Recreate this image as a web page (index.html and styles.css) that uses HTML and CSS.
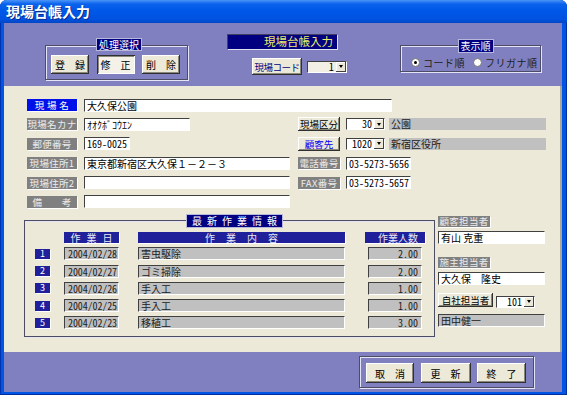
FILE: index.html
```html
<!DOCTYPE html>
<html lang="ja">
<head>
    <meta charset="UTF-8">
    <meta name="viewport" content="width=device-width, initial-scale=1.0">
    <title>現場台帳入力</title>
    <link rel="stylesheet" href="styles.css">
</head>
<body>

<div class="window">
    <div class="titlebar">現場台帳入力</div>
    <div class="client">

        <div class="head">
            <div class="group mode">
                <div class="legend">処理選択</div>
                <div class="btnrow">
                    <button class="btn mode-btn">登　録</button>
                    <button class="btn mode-btn pressed">修　正</button>
                    <button class="btn mode-btn">削　除</button>
                </div>
            </div>
            <div class="center">
                <div class="title-box">現場台帳入力</div>
                <div class="coderow">
                    <button class="btn code-btn">現場コード</button>
                    <div class="combo beige code-combo"><span class="val">1</span><span class="arrow"></span></div>
                </div>
            </div>
            <div class="group order">
                <div class="legend">表示順</div>
                <div class="radios">
                    <span class="radio checked"><span class="dot"></span>コード順</span>
                    <span class="radio"><span class="dot"></span>フリガナ順</span>
                </div>
            </div>
        </div>

        <div class="panel">
            <div class="form">
                <div class="row">
                    <span class="lbl blue">現 場 名</span>
                    <span class="field w-name">大久保公園</span>
                </div>
                <div class="row">
                    <div class="left">
                        <span class="lbl">現場名カナ</span>
                        <span class="field w-kana">ｵｵｸﾎﾞｺｳｴﾝ</span>
                    </div>
                    <div class="right">
                        <button class="btn side-btn">現場区分</button>
                        <div class="combo side-combo"><span class="val num">30</span><span class="arrow"></span></div>
                        <span class="grey w-grey">公園</span>
                    </div>
                </div>
                <div class="row">
                    <div class="left">
                        <span class="lbl">郵便番号</span>
                        <span class="field w-zip num">169-0025</span>
                    </div>
                    <div class="right">
                        <button class="btn side-btn blue-text">顧客先</button>
                        <div class="combo side-combo"><span class="val num">1020</span><span class="arrow"></span></div>
                        <span class="grey w-grey">新宿区役所</span>
                    </div>
                </div>
                <div class="row">
                    <div class="left">
                        <span class="lbl">現場住所1</span>
                        <span class="field w-addr">東京都新宿区大久保１－２－３</span>
                    </div>
                    <div class="right">
                        <span class="lbl short">電話番号</span>
                        <span class="field w-tel num">03-5273-5656</span>
                    </div>
                </div>
                <div class="row">
                    <div class="left">
                        <span class="lbl">現場住所2</span>
                        <span class="field w-addr"></span>
                    </div>
                    <div class="right">
                        <span class="lbl short">FAX番号</span>
                        <span class="field w-tel num">03-5273-5657</span>
                    </div>
                </div>
                <div class="row">
                    <div class="left">
                        <span class="lbl">備　　考</span>
                        <span class="field w-addr"></span>
                    </div>
                </div>
            </div>

            <div class="bottom">
                <div class="group works">
                    <div class="legend wide">最新作業情報</div>
                    <div class="work-grid">
                        <span></span>
                        <span class="th th-date">作業日</span>
                        <span class="th th-work">作業内容</span>
                        <span class="th th-count">作業人数</span>

                        <span class="badge">1</span>
                        <span class="cell date num">2004/02/28</span>
                        <span class="cell work">害虫駆除</span>
                        <span class="cell count num">2.00</span>

                        <span class="badge">2</span>
                        <span class="cell date num">2004/02/27</span>
                        <span class="cell work">ゴミ掃除</span>
                        <span class="cell count num">2.00</span>

                        <span class="badge">3</span>
                        <span class="cell date num">2004/02/26</span>
                        <span class="cell work">手入工</span>
                        <span class="cell count num">1.00</span>

                        <span class="badge">4</span>
                        <span class="cell date num">2004/02/25</span>
                        <span class="cell work">手入工</span>
                        <span class="cell count num">1.00</span>

                        <span class="badge">5</span>
                        <span class="cell date num">2004/02/23</span>
                        <span class="cell work">移植工</span>
                        <span class="cell count num">3.00</span>
                    </div>
                </div>

                <div class="staff">
                    <span class="lbl staff-lbl">顧客担当者</span>
                    <span class="field staff-field">有山 克重</span>
                    <span class="lbl staff-lbl second">施主担当者</span>
                    <span class="field staff-field">大久保　隆史</span>
                    <div class="staff-row">
                        <button class="btn staff-btn">自社担当者</button>
                        <div class="combo staff-combo"><span class="val num">101</span><span class="arrow"></span></div>
                    </div>
                    <span class="cell staff-grey">田中健一</span>
                </div>
            </div>
        </div>

        <div class="foot">
            <div class="group actions">
                <button class="btn act w48">取　消</button>
                <button class="btn act w50">更　新</button>
                <button class="btn act w49">終　了</button>
            </div>
        </div>

    </div>
</div>

</body>
</html>
```

FILE: styles.css
```css
* {box-sizing: border-box; margin: 0; padding: 0;}
body {background: #fff; font-family: "Noto Sans CJK JP", sans-serif; font-size: 10px; color: #000;}

/* window frame */
.window {width: 567px; height: 395px; display: flex; flex-direction: column; background: #0055e5; border-radius: 7px 7px 0 0; box-shadow: inset 1px 0 #0033b0, inset -1px 0 #002f9c, inset 0 -1px #002f9c;}
.titlebar {height: 23px; flex: none; padding: 2px 0 0 6px; color: #fff; font-size: 14px; font-weight: bold; line-height: 19px; text-shadow: 1px 1px #0b2a8c; border-radius: 7px 7px 0 0; background: linear-gradient(#4a95f8, #0a62ec 4px, #0058e8 45%, #0052e0 85%, #0046c4);}
.client {flex: 1; display: flex; flex-direction: column; margin: 0 5px 3px 4px; background: #8080c0;}

/* shared widgets */
.btn {display: flex; align-items: center; justify-content: center; border: none; background: #ece9d8; font-family: inherit; font-size: 10px; color: #000; box-shadow: inset -1px -1px #303030, inset 1px 1px #fff, inset -2px -2px #8a8878;}
.btn.pressed {background: #f3f1e8; box-shadow: inset 1px 1px #303030, inset -1px -1px #fff, inset 2px 2px #8a8878;}
.group {border: 1px solid #4c4c64; box-shadow: inset 1px 1px #e4e4f4, 1px 1px #e4e4f4;}
.legend {display: table; margin: -7px auto 0; height: 11px; line-height: 11px; padding: 0 2px; background: #000080; color: #fff; font-size: 10px; box-shadow: 0 0 0 1px #b8b8dc;}
.num {font-feature-settings: "hwid";}
.field {display: block; height: 13px; line-height: 11px; padding-left: 2px; background: #fff; border: 1px solid; border-color: #404040 #fff #fff #404040; white-space: nowrap; overflow: hidden;}
.grey {display: block; height: 12px; line-height: 12px; padding-left: 2px; background: #c0c0c0; color: #202020;}
.lbl {display: block; flex: none; width: 50px; height: 12px; line-height: 12px; text-align: center; background: #808080; color: #ececec; font-size: 9.5px; letter-spacing: 0.3px; box-shadow: 1px 1px #fff;}
.lbl.blue {background: #0010e8; color: #fff;}
.combo {display: flex; flex: none; height: 12px; background: #fff; border: 1px solid; border-color: #404040 #fff #fff #404040;}
.combo.beige {background: #f2f0e4;}
.combo .val {flex: 1; text-align: right; padding-right: 2px; line-height: 10px;}
.combo .arrow {display: flex; align-items: center; justify-content: center; width: 10px; background: #ece9d8; box-shadow: inset -1px -1px #404040, inset 1px 1px #fff;}
.combo .arrow::after {content: ""; border-left: 2.5px solid transparent; border-right: 2.5px solid transparent; border-top: 3px solid #000;}

/* header strip */
.head {height: 63px; flex: none; display: flex; align-items: flex-start; padding-left: 41px;}
.mode {width: 143px; height: 35px; margin-top: 22px; padding-left: 5px;}
.btnrow {display: flex; gap: 7.5px; margin-top: 5px;}
.mode-btn {width: 38px; height: 19px;}
.center {width: 110px; margin: 11px 0 0 39px;}
.title-box {height: 15px; line-height: 14px; text-align: right; padding-right: 4px; background: #000080; color: #ecec6a; font-size: 11.5px; box-shadow: inset 1px 1px #404060, 1px 1px #e0e0f0;}
.coderow {display: flex; align-items: center; margin: 9px 0 0 25px;}
.code-btn {width: 50px; height: 17px; flex: none; color: #000080; font-size: 9.5px; letter-spacing: -0.5px;}
.code-combo {width: 40px; margin-left: 5px;}
.order {width: 141px; height: 27px; margin: 22px 0 0 63px; padding-left: 10px;}
.order .legend {margin-top: -6px; height: 12px; line-height: 12px;}
.radios {display: flex; margin-top: 5px; color: #202020; letter-spacing: 0.5px;}
.radio {display: flex; align-items: center; gap: 3px; height: 10px;}
.radio + .radio {margin-left: 8px;}
.dot {display: flex; align-items: center; justify-content: center; width: 9px; height: 9px; border-radius: 50%; background: #fff; border: 1px solid #707070;}
.radio.checked .dot::after {content: ""; width: 3px; height: 3px; border-radius: 50%; background: #000;}

/* beige form panel */
.panel {height: 266px; flex: none; padding: 12px 0 0 20px; background: #ece9d8; box-shadow: inset -2px 0 #a8a69a;}
.form {display: flex; flex-direction: column; gap: 5.4px; padding-left: 3px;}
.row {display: flex; align-items: center; gap: 7px; height: 14px;}
.left {display: flex; align-items: center; gap: 7px; width: 263px;}
.right {display: flex; align-items: center; margin-left: 1px;}
.w-name {width: 308px;}
.w-kana {width: 106px;}
.w-zip {width: 46px;}
.w-addr {width: 206px;}
.w-tel {width: 65px; margin-left: 6px;}
.w-grey {width: 157px; margin-left: 4px;}
.lbl.short {width: 42px;}
.side-btn {width: 42px; height: 14px; font-size: 9.5px;}
.blue-text {color: #0000f0;}
.side-combo {width: 39px; margin-left: 6px;}

/* work history */
.bottom {display: flex; align-items: flex-start; margin-top: 11px;}
.works {width: 411px; height: 117px; padding-left: 10px;}
.legend.wide {margin-top: -6px; height: 12px; line-height: 12px; padding: 0 0 0 5px; letter-spacing: 5px;}
.work-grid {display: grid; grid-template-columns: 29px 74px 227px 60px; grid-template-rows: 11px repeat(5, 13px); row-gap: 4.3px; margin-top: 5px; align-items: center; justify-items: start;}
.th {height: 11px; line-height: 11px; background: #20209a; color: #e8e8f4; text-align: center; box-shadow: 1px 1px #fff;}
.th-date {width: 55px; letter-spacing: 6px; padding-left: 6px;}
.th-work {width: 207px; letter-spacing: 11px; padding-left: 11px;}
.th-count {width: 60px; padding-left: 6px;}
.badge {width: 15px; height: 10px; line-height: 10px; text-align: center; background: #20209a; color: #fff; font-size: 9px; box-shadow: 1px 1px #fff;}
.cell {display: block; height: 13px; line-height: 11px; background: #c0c0c0; color: #202020; border: 1px solid; border-color: #404040 #fff #fff #404040; white-space: nowrap; overflow: hidden;}
.date {width: 55px; padding-left: 3px; letter-spacing: -0.1px;}
.work {width: 207px; padding-left: 2px;}
.count {width: 54px; justify-self: center; text-align: right; padding-right: 3px;}

/* staff column */
.staff {display: flex; flex-direction: column; align-items: flex-start; width: 107px; margin: -4px 0 0 3px;}
.staff-lbl {width: 52px; height: 11px; line-height: 11px;}
.staff-lbl.second {margin-top: 13px;}
.staff-field {width: 107px; margin-top: 4px;}
.staff-row {display: flex; align-items: flex-start; margin-top: 8px;}
.staff-btn {width: 55px; height: 14px; font-size: 9.5px;}
.staff-combo {width: 39px; margin: 3px 0 0 3px;}
.staff-grey {width: 107px; margin-top: 6px; padding-left: 2px;}

/* footer buttons */
.foot {flex: 1; display: flex; justify-content: flex-end; align-items: flex-start; padding: 4px 28px 0 0;}
.actions {display: flex; gap: 6.5px; width: 175px; height: 32px; padding: 6px 0 0 6px;}
.act {height: 20px;}
.w48 {width: 48px;}
.w50 {width: 50px;}
.w49 {width: 49px;}
```
